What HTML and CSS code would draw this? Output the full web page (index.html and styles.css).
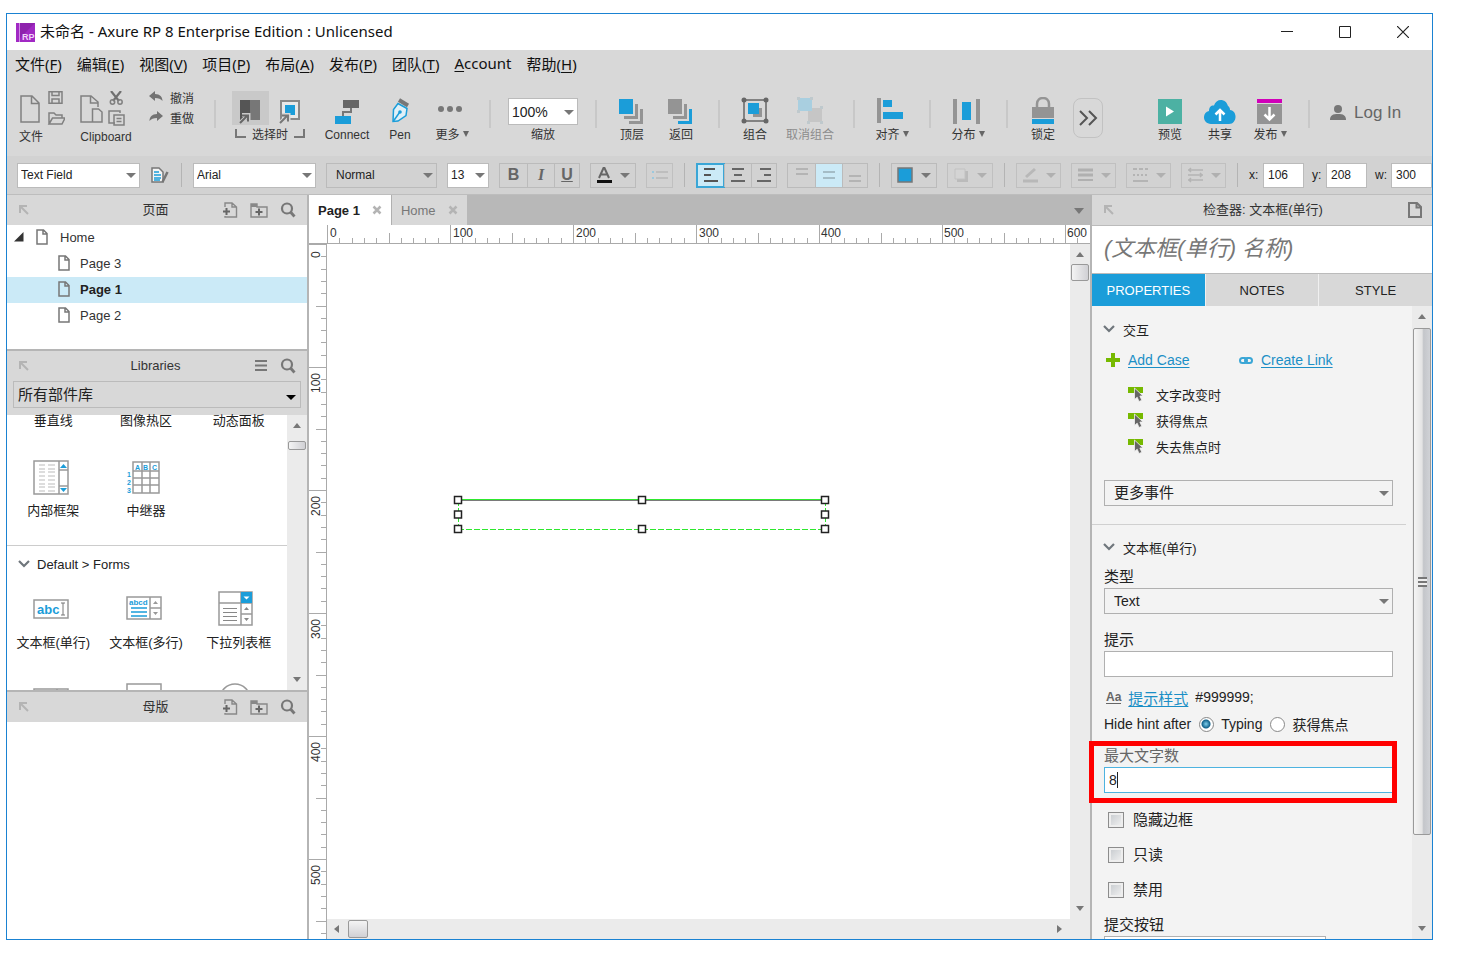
FILE: index.html
```html
<!DOCTYPE html>
<html lang="zh-CN">
<head>
<meta charset="utf-8">
<title>未命名 - Axure RP 8 Enterprise Edition : Unlicensed</title>
<link rel="stylesheet" href="styles.css">
</head>
<body>
<svg class="defs" aria-hidden="true">
  <symbol id="page" viewBox="0 0 12 16"><path d="M1 1h6.500L11 4.500V15H1zM7 1v4h4" fill="none" stroke="#777" stroke-width="1.500"/></symbol>
  <symbol id="dock" viewBox="0 0 10 10"><path d="M1 8V1h7M1.500 1.500l7.500 7.500" fill="none" stroke="#b4b4b4" stroke-width="2"/></symbol>
  <symbol id="search" viewBox="0 0 16 16"><circle cx="7" cy="6.500" r="5" fill="none" stroke="#777" stroke-width="2.200"/><path d="M10.500 10l4 4.500" stroke="#777" stroke-width="2.800"/></symbol>
  <symbol id="addpage" viewBox="0 0 16 16"><path d="M3 5V1h7l4.500 4v10H3v-1M10 1v4h4" fill="none" stroke="#888" stroke-width="1.400"/><path d="M4.500 6v7M1 9.500h7" stroke="#666" stroke-width="2"/></symbol>
  <symbol id="addfolder" viewBox="0 0 18 16"><path d="M1 15V2h6v3h10v10z" fill="none" stroke="#888" stroke-width="1.400"/><path d="M1 2h6v3H1z" fill="#888"/><path d="M9 6.500v7M5.500 10h7" stroke="#666" stroke-width="2"/></symbol>
  <symbol id="chevron" viewBox="0 0 12 8"><path d="M1 1l5 5 5-5" fill="none" stroke="#6f767c" stroke-width="2.200"/></symbol>
  <symbol id="close" viewBox="0 0 10 10"><path d="M1.500 1.500l7 7M8.500 1.500l-7 7" stroke="#b4b4b4" stroke-width="2.500"/></symbol>
  <symbol id="event" viewBox="0 0 15 16"><path d="M0 1h15v6H0z" fill="#76b900"/><path d="M6.500 2v11.500l2.700-2.300 1.800 4.300 2.800-1.200-1.900-4.300h3.100z" fill="#666" stroke="#f3f3f3" stroke-width=".8"/></symbol>
</svg>

<div class="window">
  <header class="titlebar">
    <svg class="logo" viewBox="0 0 19 19" aria-hidden="true"><path d="M0 0h19v19H0z" fill="#a129c4"/><path d="M4 0h15L4 15z" fill="#8e22ad"/><path d="M3.500 0v19" stroke="#d08be4"/><text x="6" y="17" class="logo-text">RP</text></svg>
    <h1 class="title">未命名 - Axure RP 8 Enterprise Edition : Unlicensed</h1>
    <button class="winbtn" aria-label="Minimize"><svg width="12" height="12"><path d="M0 5.500h12" stroke="#222"/></svg></button>
    <button class="winbtn" aria-label="Maximize"><svg width="12" height="12"><path d="M.5.5h11v11H.5z" fill="none" stroke="#222"/></svg></button>
    <button class="winbtn" aria-label="Close"><svg width="12" height="12"><path d="M0 0l12 12M12 0L0 12" stroke="#222" stroke-width="1.200"/></svg></button>
  </header>

  <nav class="menubar">
    <button>文件(<u>F</u>)</button><button>编辑(<u>E</u>)</button><button>视图(<u>V</u>)</button><button>项目(<u>P</u>)</button><button>布局(<u>A</u>)</button><button>发布(<u>P</u>)</button><button>团队(<u>T</u>)</button><button><u>A</u>ccount</button><button>帮助(<u>H</u>)</button>
  </nav>

  <div class="toolbar">
    <div class="tool tool-low tool-file">
      <svg width="46" height="36" viewBox="0 0 46 36" fill="none" stroke="#808080" stroke-width="1.500"><path d="M2 5h11l7 7v19H2zM12.500 5v7.500H20"/><path d="M30 0.800h13v11.500H30zM33 1v3.500h7V1M33 12V8h7v4"/><path d="M30 33V22h5l2 2h6v3M30 33l3.500-6H46l-3 6z"/></svg>
      <span>文件</span>
    </div>
    <div class="tool tool-low">
      <svg width="52" height="36" viewBox="0 0 52 36" fill="none" stroke="#808080" stroke-width="1.500"><path d="M12 31H1V5h10l7 6v5M10.500 5v7H18M12.500 18h6l3.500 3v10h-9.500z"/><g transform="translate(-1 0)"><path d="M32 0l8 10M42 0l-8 10" stroke="#707070" stroke-width="2.200"/><circle cx="33.500" cy="11" r="2.200"/><circle cx="41" cy="11" r="2.200"/><path d="M36 32h-6V20h11v2M35 24h10v10H35zM37.500 27.500h5M37.500 30.500h5"/></g></svg>
      <span>Clipboard</span>
    </div>
    <div class="history">
      <button><svg width="14" height="12" viewBox="0 0 14 12"><path d="M0 5l6-5v3c5 0 7.500 3 7.500 7C12 8 9.500 7 6 7v3z" fill="#737373"/></svg>撤消</button>
      <button><svg width="14" height="12" viewBox="0 0 14 12"><path d="M14 5L8 0v3C3 3 .5 6 .5 10 2 8 4.500 7 8 7v3z" fill="#737373"/></svg>重做</button>
    </div>
    <i class="sep"></i>
    <div class="tool">
      <div class="modes">
        <button class="mode mode-on" aria-label="相交选中"><svg width="22" height="26" viewBox="0 0 22 26"><path d="M1 1h10v20H1z" fill="#555"/><path d="M11 1h10v20H11z" fill="#777"/><path d="M1 24l7-7M3 16h6.500v6.500" fill="none" stroke="#c9c9c9" stroke-width="4"/><path d="M1 24l7-7M3 16.500h6v6" fill="none" stroke="#666" stroke-width="2"/></svg></button>
        <button class="mode" aria-label="包含选中"><svg width="22" height="26" viewBox="0 0 22 26"><path d="M2 2h18v18H2z" fill="#e8e8e8" stroke="#888" stroke-width="2"/><path d="M6 6h10v10H6z" fill="#1b9dd9"/><path d="M1 24l7-7M3 16h6.500v6.500" fill="none" stroke="#d8d8d8" stroke-width="4"/><path d="M1 24l7-7M3 16.500h6v6" fill="none" stroke="#777" stroke-width="2"/></svg></button>
      </div>
      <span class="bracket">选择时</span>
    </div>
    <button class="tool"><svg width="26" height="28" viewBox="0 0 26 28"><path d="M9 3h16v8H9z" fill="#666"/><path d="M17 11v4H9v4" fill="none" stroke="#777" stroke-width="2"/><path d="M1 19h16v8H1z" fill="#1b9dd9"/></svg><span>Connect</span></button>
    <button class="tool"><svg width="20" height="28" viewBox="0 0 20 28"><path d="M9 3l9 5.500" stroke="#777" stroke-width="4"/><path d="M8 6.500l9 5-1 7-8 5.500-5 .5.500-12z" fill="#e0f0f7" stroke="#1b9dd9" stroke-width="1.500"/><path d="M3.500 24l6-8.500" stroke="#1b9dd9" stroke-width="1.500"/><circle cx="10" cy="15" r="1.800" fill="#1b9dd9"/></svg><span>Pen</span></button>
    <button class="tool"><svg width="30" height="28" viewBox="0 0 30 28" fill="#777"><circle cx="4" cy="12" r="3"/><circle cx="13" cy="12" r="3"/><circle cx="22" cy="12" r="3"/></svg><span class="drop">更多</span></button>
    <i class="sep"></i>
    <label class="tool"><span class="select select-zoom"><select><option>100%</option></select></span><span>缩放</span></label>
    <i class="sep"></i>
    <button class="tool"><svg width="28" height="28" viewBox="0 0 28 28"><path d="M22 12h3v15H11v-3h11z" fill="#949494"/><path d="M17 7h3v15H6v-3h11z" fill="#949494"/><path d="M1 2h14v15H1z" fill="#1b9dd9"/></svg><span>顶层</span></button>
    <button class="tool"><svg width="28" height="28" viewBox="0 0 28 28"><path d="M22 12h3v15H11v-3h11z" fill="#1b9dd9"/><path d="M17 7h3v15H6v-3h11z" fill="#949494"/><path d="M1 2h14v15H1z" fill="#949494"/></svg><span>返回</span></button>
    <i class="sep"></i>
    <button class="tool"><svg width="28" height="28" viewBox="0 0 28 28"><path d="M12 11h9v9h-9z" fill="#949494"/><path d="M7 6h11v11H7z" fill="#1b9dd9"/><path d="M3 3h22v21H3z" fill="none" stroke="#666" stroke-width="1.500"/><g fill="#666"><circle cx="3" cy="3" r="2.500"/><circle cx="25" cy="3" r="2.500"/><circle cx="3" cy="24" r="2.500"/><circle cx="25" cy="24" r="2.500"/></g></svg><span>组合</span></button>
    <button class="tool" disabled><svg width="28" height="28" viewBox="0 0 28 28"><path d="M12 11h14v14H12z" fill="#c6c6c6"/><path d="M2 1h14v13H2z" fill="#a9cfe0"/><path d="M1 0h3v3H1zM14 0h3v3h-3zM1 13h3v3H1zM24 9h3v3h-3zM11 24h3v3h-3zM24 24h3v3h-3z" fill="#bfc9cd"/></svg><span>取消组合</span></button>
    <i class="sep"></i>
    <button class="tool"><svg width="32" height="28" viewBox="0 0 32 28"><path d="M1 1h4v25H1z" fill="#949494"/><path d="M7 3h9v7H7zM7 15h20v7H7z" fill="#1b9dd9"/></svg><span class="drop">对齐</span></button>
    <i class="sep"></i>
    <button class="tool"><svg width="32" height="28" viewBox="0 0 32 28"><path d="M1 2h4v25H1zM24 2h4v25h-4z" fill="#949494"/><path d="M10 5h9v18h-9z" fill="#1b9dd9"/></svg><span class="drop">分布</span></button>
    <i class="sep"></i>
    <button class="tool"><svg width="24" height="28" viewBox="0 0 24 28"><path d="M6 11V7c0-8 12-8 12 0v4" fill="none" stroke="#949494" stroke-width="2.500"/><path d="M1 10h22v11H1z" fill="#949494"/><path d="M1 22h22v5H1z" fill="#1b9dd9"/></svg><span>锁定</span></button>
    <button class="overflow" aria-label="More tools"><svg width="20" height="16" viewBox="0 0 20 16"><path d="M2 1l7 7-7 7M11 1l7 7-7 7" fill="none" stroke="#555" stroke-width="2"/></svg></button>
    <i></i>
    <button class="tool"><svg width="26" height="28" viewBox="0 0 26 28"><path d="M1 2h24v25H1z" fill="#4cb1a3"/><path d="M9 9.500l8 5-8 5z" fill="#fff"/></svg><span>预览</span></button>
    <button class="tool"><svg width="32" height="28" viewBox="0 0 32 28"><path d="M7 27c-9 0-9-12-2-13C5 9 8 8 10 8.500 12 1 22 1 24 9c1 .5 2 2 2 4 8 1 7 14-1 14z" fill="#1b9dd9"/><path d="M16 24V14M11.500 17.500L16 13l4.500 4.500" fill="none" stroke="#fff" stroke-width="2.500"/></svg><span>共享</span></button>
    <button class="tool"><svg width="32" height="28" viewBox="0 0 32 28"><path d="M3 2h25v4H3z" fill="#d100b9"/><path d="M3 7h25v20H3z" fill="#949494"/><path d="M15.500 10v12M10.500 17.500l5 5 5-5" fill="none" stroke="#fff" stroke-width="2.500"/></svg><span class="drop">发布</span></button>
    <i class="sep"></i>
    <button class="login"><svg width="16" height="16" viewBox="0 0 16 16" fill="#777"><circle cx="8" cy="4" r="4"/><path d="M0 15c0-5 3-6 8-6s8 1 8 6z"/></svg>Log In</button>
  </div>

  <div class="stylebar">
    <span class="select select-wide"><select aria-label="Widget style"><option>Text Field</option></select></span>
    <button class="icon-btn" aria-label="Style manager"><svg width="18" height="16" viewBox="0 0 18 16"><path d="M1 1h7l4 4v10H1z" fill="#f4f4f4" stroke="#777" stroke-width="1.500"/><path d="M3 5h5M3 8h7M3 11h7M3 13h6" stroke="#1b9dd9" stroke-width="1.500"/><path d="M16.500 5l-5 10" stroke="#777" stroke-width="2.500"/></svg></button>
    <i class="rule"></i>
    <span class="select select-wide"><select aria-label="Font"><option>Arial</option></select></span>
    <span class="select select-plain select-weight"><select aria-label="Font weight"><option>Normal</option></select></span>
    <span class="select select-size"><select aria-label="Font size"><option>13</option></select></span>
    <div class="btngroup">
      <button class="bold">B</button><button class="ital">I</button><button class="under">U</button>
    </div>
    <button class="combo caret" aria-label="Text color"><svg width="16" height="18" viewBox="0 0 16 18"><path d="M3 12L7.500 2h1L13 12M5 8.500h6" fill="none" stroke="#666" stroke-width="2"/><path d="M1 14h15v3H1z" fill="#111"/></svg></button>
    <button class="combo combo-small faded" aria-label="Bullets"><svg width="16" height="12" viewBox="0 0 16 12"><path d="M4 3h12M4 9h12" stroke="#b8b8b8" stroke-width="1.500"/><path d="M0 3h2M0 9h2" stroke="#9cc9de" stroke-width="2"/></svg></button>
    <i class="rule"></i>
    <div class="btngroup">
      <button class="chosen" aria-label="Align left"><svg width="16" height="16"><path d="M1 2h11M1 8h7M1 14h14" stroke="#555" stroke-width="2"/></svg></button>
      <button aria-label="Align center"><svg width="16" height="16"><path d="M2 2h12M4 8h8M1 14h14" stroke="#666" stroke-width="2"/></svg></button>
      <button aria-label="Align right"><svg width="16" height="16"><path d="M4 2h11M8 8h7M1 14h14" stroke="#666" stroke-width="2"/></svg></button>
    </div>
    <div class="btngroup">
      <button aria-label="Top"><svg width="16" height="16"><path d="M2 2h12M2 7h12" stroke="#b4b4b4" stroke-width="2"/></svg></button>
      <button class="tinted" aria-label="Middle"><svg width="16" height="16"><path d="M2 5h12M2 11h12" stroke="#a4bcc6" stroke-width="2"/></svg></button>
      <button aria-label="Bottom"><svg width="16" height="16"><path d="M2 9h12M2 14h12" stroke="#b4b4b4" stroke-width="2"/></svg></button>
    </div>
    <i class="rule"></i>
    <button class="combo caret" aria-label="Fill"><svg width="16" height="16"><path d="M1 1h14v14H1z" fill="#1b9dd9" stroke="#777" stroke-width="1.500"/></svg></button>
    <button class="combo caret faded" aria-label="Shadow"><svg width="16" height="16"><path d="M4 4h11v11H4z" fill="#bbb"/><path d="M2 2h10v10H2z" fill="#d4d4d4" stroke="#c2c2c2"/></svg></button>
    <i class="rule"></i>
    <button class="combo combo-line caret faded" aria-label="Line color"><svg width="16" height="16"><path d="M4 10l9-8" stroke="#b8b8b8" stroke-width="3"/><path d="M1 14h15" stroke="#b8b8b8" stroke-width="3"/></svg></button>
    <button class="combo combo-line caret faded" aria-label="Line width"><svg width="16" height="16"><path d="M1 3h15M1 8h15" stroke="#b0b0b0" stroke-width="3"/><path d="M1 13h15" stroke="#b0b0b0" stroke-width="2"/></svg></button>
    <button class="combo combo-line caret faded" aria-label="Line style"><svg width="16" height="16" stroke="#b4b4b4" stroke-width="2"><path d="M1 2h15" stroke-dasharray="4 2"/><path d="M1 8h15" stroke-dasharray="2 2"/><path d="M1 14h15"/></svg></button>
    <button class="combo combo-line caret faded" aria-label="Arrow style"><svg width="16" height="16" fill="none" stroke="#b4b4b4" stroke-width="1.500"><path d="M1 3h15M1 8h15M1 13h15M4 1L2 3l2 2M13 6l2 2-2 2M4 11l-2 2 2 2"/></svg></button>
    <i class="rule"></i>
    <label class="coord">x: <input value="106"></label>
    <label class="coord">y: <input value="208"></label>
    <label class="coord">w: <input value="300"></label>
  </div>

  <div class="workspace">
    <aside class="left">
      <section>
        <div class="pane-head"><svg class="dock"><use href="#dock"/></svg><h2>页面</h2><div class="pane-tools"><button aria-label="Add page"><svg width="16" height="16"><use href="#addpage"/></svg></button><button aria-label="Add folder"><svg width="18" height="16"><use href="#addfolder"/></svg></button><button aria-label="Search"><svg width="16" height="16"><use href="#search"/></svg></button></div></div>
        <ul class="tree">
          <li class="root"><svg width="10" height="10"><path d="M9.500 0v9.500H0z" fill="#333"/></svg><svg class="leaf"><use href="#page"/></svg>Home</li>
          <li><svg class="leaf"><use href="#page"/></svg>Page 3</li>
          <li class="current"><svg class="leaf"><use href="#page"/></svg>Page 1</li>
          <li><svg class="leaf"><use href="#page"/></svg>Page 2</li>
        </ul>
      </section>
      <section class="ruled">
        <div class="pane-head"><svg class="dock"><use href="#dock"/></svg><h2>Libraries</h2><div class="pane-tools"><button aria-label="Library menu"><svg width="14" height="14"><path d="M1 2h12M1 6.500h12M1 11h12" stroke="#777" stroke-width="2"/></svg></button><button aria-label="Search"><svg width="16" height="16"><use href="#search"/></svg></button></div></div>
        <div class="library-pick"><span class="select select-plain select-library"><select aria-label="Library"><option>所有部件库</option></select></span></div>
        <div class="library">
          <div class="library-list">
            <div class="shapes shapes-tail"><span>垂直线</span><span>图像热区</span><span>动态面板</span></div>
            <div class="shapes shapes-common">
              <figure><svg width="40" height="36" viewBox="0 0 40 36"><path d="M3 1h34v33H3zM28 1v33M28 10h9M28 26h9" fill="#fff" stroke="#999" stroke-width="1.500"/><path d="M8 5h6M17 5h7M8 9h6M17 9h7M8 12h6M17 12h7M8 16h6M17 16h7M8 20h6M17 20h7M8 24h6M17 24h7M8 27h6M17 27h7M8 31h6M17 31h7" stroke="#bbb"/><path d="M29 8l3.500-4L36 8zM29 28h7l-3.500 4z" fill="#1b9dd9"/></svg><figcaption>内部框架</figcaption></figure>
              <figure><svg width="40" height="36" viewBox="0 0 40 36"><path d="M9 2h26v31H9zM18 2v31M26 2v31M9 11h26M9 18h26M9 25h26" fill="none" stroke="#999" stroke-width="1.500"/><text class="glyph" x="11" y="10">A</text><text class="glyph" x="19" y="10">B</text><text class="glyph" x="28" y="10">C</text><text class="glyph" x="3" y="17">1</text><text class="glyph" x="3" y="25">2</text><text class="glyph" x="3" y="33">3</text></svg><figcaption>中继器</figcaption></figure>
            </div>
            <h3 class="group-head"><svg width="12" height="8"><use href="#chevron"/></svg>Default &gt; Forms</h3>
            <div class="shapes shapes-forms">
              <figure><svg width="40" height="36" viewBox="0 0 40 36"><path d="M3 9h34v18H3z" fill="#fff" stroke="#999" stroke-width="1.500"/><text class="glyph glyph-big" x="6" y="23">abc</text><path d="M30 12h4M30 24h4M32 12v12" stroke="#777"/></svg><figcaption>文本框(单行)</figcaption></figure>
              <figure><svg width="40" height="36" viewBox="0 0 40 36"><path d="M3 6h34v22H3zM26 6v22M26 17h11" fill="#fff" stroke="#999" stroke-width="1.500"/><text class="glyph glyph-mid" x="5" y="14">abcd</text><path d="M7 17h16M7 21h16M7 25h16" stroke="#1b9dd9" stroke-width="1.500"/><path d="M29 13l2.500-3 2.500 3zM29 21h5l-2.500 3z" fill="#999"/></svg><figcaption>文本框(多行)</figcaption></figure>
              <figure><svg width="40" height="36" viewBox="0 0 40 36"><path d="M2 1h33v33H2zM2 12h33M24 1v33M24 23h11" fill="#fff" stroke="#999" stroke-width="1.500"/><path d="M24 1h11v11H24z" fill="#1b9dd9"/><path d="M26.500 5.500h6l-3 3z" fill="#fff"/><path d="M27 19l2.500-3 2.500 3zM27 27h5l-2.500 3zM6 17h14v1H6zM6 21h14v1H6zM6 25h14v1H6zM6 29h14v1H6z" fill="#888"/></svg><figcaption>下拉列表框</figcaption></figure>
              <figure><svg width="40" height="36" viewBox="0 0 40 36"><path d="M3 6h34v24H3zM26 6v24" fill="none" stroke="#999" stroke-width="1.500"/></svg></figure>
              <figure><svg width="40" height="36" viewBox="0 0 40 36"><path d="M3 1h34v33H3z" fill="none" stroke="#999" stroke-width="1.500"/></svg></figure>
              <figure><svg width="40" height="36" viewBox="0 0 40 36"><circle cx="18" cy="16" r="15" fill="none" stroke="#999" stroke-width="1.500"/></svg></figure>
            </div>
          </div>
          <div class="vbar"><i class="up"></i><i class="thumb thumb-flat"></i><i class="down"></i></div>
        </div>
      </section>
      <section class="ruled masters">
        <div class="pane-head"><svg class="dock"><use href="#dock"/></svg><h2>母版</h2><div class="pane-tools"><button aria-label="Add master"><svg width="16" height="16"><use href="#addpage"/></svg></button><button aria-label="Add folder"><svg width="18" height="16"><use href="#addfolder"/></svg></button><button aria-label="Search"><svg width="16" height="16"><use href="#search"/></svg></button></div></div>
      </section>
    </aside>

    <main class="center">
      <div class="tabs">
        <button class="tab tab-active">Page 1<svg width="10" height="10"><use href="#close"/></svg></button>
        <button class="tab">Home<svg width="10" height="10"><use href="#close"/></svg></button>
        <button class="tab-list" aria-label="All tabs"></button>
      </div>
      <div class="ruler-x">
        <svg width="100%" height="18">
          <defs><pattern id="tx" width="123" height="18" patternUnits="userSpaceOnUse" x="18"><path class="tick" d="M.5 0v18M12.800 13v5M25.100 13v5M37.400 13v5M49.700 13v5M62 8v10M74.300 13v5M86.600 13v5M98.900 13v5M111.200 13v5"/></pattern></defs>
          <rect x="18" width="100%" height="18" fill="url(#tx)"/>
          <g class="scale"><text x="21" y="12">0</text><text x="144" y="12">100</text><text x="267" y="12">200</text><text x="390" y="12">300</text><text x="512" y="12">400</text><text x="635" y="12">500</text><text x="758" y="12">600</text></g>
        </svg>
      </div>
      <div class="stage">
        <div class="ruler-y">
          <svg width="17" height="100%">
            <defs><pattern id="ty" width="17" height="123" patternUnits="userSpaceOnUse"><path class="tick" d="M0 .5h17M12 12.800h5M12 25.100h5M12 37.400h5M12 49.700h5M7 62h10M12 74.300h5M12 86.600h5M12 98.900h5M12 111.200h5"/></pattern></defs>
            <rect width="17" height="100%" fill="url(#ty)"/>
            <g class="scale"><text transform="translate(11 14) rotate(-90)">0</text><text transform="translate(11 149) rotate(-90)">100</text><text transform="translate(11 272) rotate(-90)">200</text><text transform="translate(11 395) rotate(-90)">300</text><text transform="translate(11 518) rotate(-90)">400</text><text transform="translate(11 641) rotate(-90)">500</text></g>
          </svg>
        </div>
        <div class="canvas">
          <svg class="widget" width="377" height="39" viewBox="0 0 377 39"><path d="M5 5.500h367" stroke="#7a7a7a"/><path d="M5 4.500h367" stroke="#2ee82e"/><path d="M5.500 5v29M372.500 5v29M5 34.500h367" fill="none" stroke="#2ee82e" stroke-dasharray="6 2"/><g fill="#fff" stroke="#222" stroke-width="1.500"><path d="M1.500 1.500h7v7h-7zM1.500 16h7v7h-7zM1.500 30.500h7v7h-7zM185.500 1.500h7v7h-7zM185.500 30.500h7v7h-7zM368.500 1.500h7v7h-7zM368.500 16h7v7h-7zM368.500 30.500h7v7h-7z"/></g></svg>
        </div>
        <div class="vbar"><i class="up"></i><i class="thumb thumb-square"></i><i class="down"></i></div>
        <div class="hbar"><i class="prev"></i><i class="thumb"></i><i class="next"></i></div>
      </div>
    </main>

    <aside class="inspector">
      <div class="pane-head"><svg class="dock"><use href="#dock"/></svg><h2>检查器: 文本框(单行)</h2><div class="pane-tools"><button aria-label="Page properties"><svg width="14" height="16" viewBox="0 0 14 16"><path d="M1 1h8l4 4v10H1zM8.500 1v4.500H13" fill="none" stroke="#777" stroke-width="2"/></svg></button></div></div>
      <input class="name" placeholder="(文本框(单行) 名称)" aria-label="名称">
      <div class="views"><button class="view view-on">PROPERTIES</button><button class="view">NOTES</button><button class="view">STYLE</button></div>
      <div class="scroller">
        <form class="props">
          <h3 class="section"><svg width="12" height="8"><use href="#chevron"/></svg>交互</h3>
          <div class="actions">
            <span class="action"><svg width="14" height="14"><path d="M7 0v14M0 7h14" stroke="#76b900" stroke-width="4"/></svg><a href="#case">Add Case</a></span>
            <span class="action"><svg width="14" height="14" viewBox="0 0 14 14" fill="none" stroke="#3aa6d6" stroke-width="2"><rect x="1" y="5" width="7" height="5" rx="2.500"/><rect x="6" y="5" width="7" height="5" rx="2.500"/></svg><a href="#link">Create Link</a></span>
          </div>
          <ul class="events">
            <li><svg width="15" height="16"><use href="#event"/></svg>文字改变时</li>
            <li><svg width="15" height="16"><use href="#event"/></svg>获得焦点</li>
            <li><svg width="15" height="16"><use href="#event"/></svg>失去焦点时</li>
          </ul>
          <span class="select select-form select-more"><select aria-label="更多事件"><option>更多事件</option></select></span>
          <hr class="divider">
          <h3 class="section section-next"><svg width="12" height="8"><use href="#chevron"/></svg>文本框(单行)</h3>
          <label class="caption caption-first" for="type">类型</label>
          <span class="select select-form"><select id="type"><option>Text</option></select></span>
          <label class="caption caption-hint" for="hint">提示</label>
          <input class="field" id="hint">
          <p class="hint-style"><b>Aa</b><a href="#hint">提示样式</a><span>#999999;</span></p>
          <div class="hide-hint"><span>Hide hint after</span><label><input type="radio" name="hide" checked>Typing</label><label><input type="radio" name="hide">获得焦点</label></div>
          <label class="caption caption-max" for="max">最大文字数</label>
          <div class="field field-focus"><input id="max" value="8" size="1"><i class="cursor"></i></div>
          <label class="check check-first"><input type="checkbox">隐藏边框</label>
          <label class="check"><input type="checkbox">只读</label>
          <label class="check"><input type="checkbox">禁用</label>
          <label class="caption caption-submit" for="submit">提交按钮</label>
          <input class="field field-short" id="submit">
        </form>
        <div class="vbar"><i class="up"></i><i class="thumb thumb-tall"></i><i class="down"></i></div>
      </div>
      <div class="callout"></div>
    </aside>
  </div>
</div>
</body>
</html>
```
FILE: styles.css
```css
* { box-sizing: border-box; }
html, body { height: 100%; }
body {
  margin: 0;
  padding: 13px 24px 21px 6px;
  background: #fff;
  color: #222;
  font: 13px "Liberation Sans", "Noto Sans CJK SC", sans-serif;
  overflow: hidden;
}
button, input, select { font: inherit; color: inherit; margin: 0; padding: 0; border: 0; background: none; border-radius: 0; outline: 0; }
h1, h2, h3, p, ul, figure { margin: 0; padding: 0; font-size: inherit; font-weight: normal; list-style: none; }
svg { display: block; flex: none; }
.defs { position: absolute; width: 0; height: 0; }

.window { display: flex; flex-direction: column; height: 100%; border: 1px solid #1a82d2; overflow: hidden; }

.titlebar { display: flex; align-items: center; flex: none; height: 36px; padding-left: 9px; }
.logo { width: 19px; height: 19px; }
.logo-text { font: bold 9px "Liberation Sans", sans-serif; fill: #f0d4f8; }
.title { flex: 1; margin-left: 5px; padding-bottom: 3px; font: 15px "Noto Sans", "Noto Sans CJK SC", sans-serif; color: #111; white-space: nowrap; }
.winbtn { display: grid; place-items: center; width: 58px; height: 36px; }

.menubar { display: flex; align-items: center; gap: 15px; flex: none; height: 30px; padding: 0 0 4px 8px; background: #d8d8d8; font: 15px "Noto Sans", "Noto Sans CJK SC", sans-serif; color: #111; }
.menubar button { white-space: nowrap; }
.menubar u { text-underline-offset: 2px; }

.toolbar {
  display: grid;
  grid-template-columns: 65px 68px 63px 24px 86px 68px 38px 66px 10px 96px 10px 62px 36px 40px 32px 78px 10px 66px 10px 66px 12px 60px 30px 1fr 50px 50px 50px 28px 109px;
  flex: none;
  height: 76px;
  padding-top: 11px;
  background: #d8d8d8;
  font-size: 12px;
  color: #333;
}
.tool { display: flex; flex-direction: column; align-items: center; justify-content: flex-end; height: 52px; white-space: nowrap; line-height: 16px; gap: 2px; }
.tool > span:last-child { display: block; }
.tool:disabled { color: #8c8c8c; }
.tool-low { height: 54px; }
.tool-file { align-items: flex-start; padding-left: 12px; }
.history { display: flex; flex-direction: column; gap: 4px; height: 36px; padding-left: 9px; }
.history button { display: flex; align-items: center; gap: 7px; height: 14px; padding-bottom: 2px; white-space: nowrap; }
.history button + button { margin-top: 2px; }
.sep { justify-self: center; width: 2px; height: 28px; margin-top: 9px; background: #c8c8c8; }
.modes { display: flex; gap: 3px; }
.mode { display: grid; place-items: end center; width: 37px; height: 34px; }
.mode-on { background: #c9c9c9; }
.bracket::before, .bracket::after { content: ""; display: inline-block; width: 9px; height: 7px; border: solid #777; border-width: 0 0 2px 2px; margin-right: 6px; vertical-align: 1px; }
.bracket::after { border-width: 0 2px 2px 0; margin: 0 0 0 6px; }
.drop::after { content: ""; display: inline-block; margin-left: 3px; border: 3px solid transparent; border-top: 6px solid #666; border-bottom: 0; vertical-align: 2px; }
.overflow { display: grid; place-items: center; width: 30px; height: 40px; margin-top: 7px; border: 1px solid #c2c2c2; border-radius: 8px; }
.login { display: flex; align-items: center; gap: 8px; height: 44px; padding-left: 7px; font-size: 17px; color: #666; }

.select { position: relative; display: block; height: 25px; border: 1px solid #bbb; background: #fff; color: #222; }
.select select { display: block; width: 100%; height: 100%; padding: 0 3px; appearance: none; font-size: 12px; }
.select::after { content: ""; position: absolute; right: 3px; top: 50%; margin-top: -2px; border: 5px solid transparent; border-top-color: #777; border-bottom: 0; pointer-events: none; }
.select-zoom { width: 70px; height: 27px; }
.select-zoom select { font-size: 14px; }
.select-wide { width: 123px; }
.select-weight { width: 111px; }
.select-weight select { padding-left: 9px; }
.select-size { width: 42px; }
.select-plain { background: none; }

.stylebar { display: flex; align-items: center; gap: 10px; flex: none; height: 39px; padding-left: 10px; background: #d2d2d2; border-bottom: 1px solid #bdbdbd; font-size: 12px; overflow: hidden; }
.stylebar > * { flex: none; }
.icon-btn { display: grid; place-items: center; width: 20px; height: 25px; }
.rule { width: 1px; height: 24px; margin: 0 1px; background: #b4b4b4; }
.btngroup { display: flex; height: 25px; border: 1px solid #bbb; }
.btngroup button { display: grid; place-items: center; width: 27px; height: 23px; color: #666; font-size: 16px; line-height: 20px; }
.btngroup button:last-child { width: 25px; }
.btngroup button + button { border-left: 1px solid #bbb; }
.btngroup .bold, .btngroup .under { font-weight: bold; }
.btngroup .under { text-decoration: underline; }
.btngroup .ital { font-family: "Liberation Serif", serif; font-style: italic; font-weight: bold; }
.btngroup .chosen { background: #cbeaf7; outline: 2px solid #3aa6d6; outline-offset: -1px; }
.btngroup .tinted { background: #cbeaf7; }
.combo { display: flex; align-items: center; justify-content: center; gap: 8px; width: 46px; height: 25px; border: 1px solid #bbb; }
.combo-line { width: 45px; }
.combo-small { width: 27px; }
.caret::after { content: ""; border: 5px solid transparent; border-top-color: #777; border-bottom: 0; }
.faded { border-color: #c0c0c0; }
.faded::after { border-top-color: #b0b0b0; }
.coord { display: flex; align-items: center; justify-content: space-between; gap: 4px; min-width: 55px; margin-right: -2px; }
.coord input { width: 41px; height: 25px; padding-left: 4px; border: 1px solid #bbb; background: #fff; color: #222; }

.workspace { display: flex; flex: 1; min-height: 0; }
.left { display: flex; flex-direction: column; flex: none; width: 302px; border-right: 2px solid #b5b5b5; background: #fff; }
.ruled { border-top: 2px solid #b5b5b5; }
.masters { flex: 1; }
.pane-head { display: grid; grid-template-columns: 1fr auto 1fr; align-items: center; height: 30px; padding: 0 12px; background: #d8d8d8; color: #333; }
.left .pane-head { padding-right: 11px; }
.pane-head h2 { font-size: 13px; line-height: 20px; }
.dock { width: 10px; height: 10px; }
.pane-tools { display: flex; align-items: center; justify-content: flex-end; gap: 12px; }
.pane-tools button { display: block; }
.left h2 { margin-right: 4px; }

.tree { height: 124px; font-size: 13px; color: #333; }
.tree li { display: flex; align-items: center; gap: 10px; height: 26px; padding: 0 0 2px 51px; }
.tree .root { padding-left: 7px; gap: 12px; }
.tree .current { background: #cbeaf7; font-weight: bold; color: #222; }
.leaf { width: 12px; height: 16px; }

.library-pick { height: 34px; padding: 0 6px; background: #d8d8d8; }
.select-library { height: 27px; }
.select-library select { padding-left: 4px; font-size: 15px; }
.select-library::after { border-top-color: #000; margin-top: 0; right: 4px; }
.library { display: flex; height: 275px; }
.library-list { flex: 1; padding-right: 2px; clip-path: inset(-8px 0 0 0); }
.shapes { display: grid; grid-template-columns: repeat(3, 1fr); justify-items: center; }
.shapes-tail { height: 12px; line-height: 12px; }
.shapes-common { margin-right: -2px; padding: 33px 2px 25px 0; border-bottom: 1px solid #ccc; }
.shapes-forms { padding-top: 9px; row-gap: 31px; }
.shapes figure { display: flex; flex-direction: column; align-items: center; gap: 6px; }
.shapes-forms figure { gap: 7px; }
.shapes figure svg { margin-right: 4px; }
.shapes figcaption { line-height: 18px; white-space: nowrap; }
.glyph { font: bold 7px "Liberation Sans", sans-serif; fill: #1b9dd9; }
.glyph-mid { font-size: 8px; }
.glyph-big { font-size: 13px; }
.group-head { display: flex; align-items: center; gap: 7px; height: 36px; padding-left: 11px; }

.vbar { display: flex; flex-direction: column; align-items: center; flex: none; width: 20px; padding: 8px 0; background: #ebebeb; }
.vbar i, .hbar i { flex: none; }
.up { border: 4px solid transparent; border-bottom: 5px solid #777; border-top: 0; }
.down { margin-top: auto; border: 4px solid transparent; border-top: 5px solid #777; border-bottom: 0; }
.prev { border: 4px solid transparent; border-right: 5px solid #777; border-left: 0; }
.next { margin-left: auto; border: 4px solid transparent; border-left: 5px solid #777; border-right: 0; }
.thumb { width: 20px; height: 18px; border: 1px solid #999; border-radius: 2px; background: linear-gradient(#f4f4f4, #d0d0d4); }
.thumb-flat { width: 18px; height: 9px; margin-top: 13px; background: linear-gradient(90deg, #f4f4f4, #d0d0d4); }
.thumb-square { width: 18px; height: 17px; margin-top: 7px; background: linear-gradient(90deg, #f4f4f4, #d0d0d4); }
.vbar .thumb-tall { display: grid; width: 18px; flex: 0 1 507px; margin-top: 9px; background: linear-gradient(90deg, #f4f4f4, #e4e4e4 50%, #c4c6ca 60%, #d0d2d6); }
.thumb-tall::after { content: ""; place-self: center; width: 9px; height: 10px; background: repeating-linear-gradient(#777 0 2px, #eee 2px 4px); }

.center { display: flex; flex-direction: column; flex: 1; min-width: 0; border-right: 2px solid #b5b5b5; }
.tabs { display: flex; height: 30px; background: #b8b8b8; }
.tab { display: flex; align-items: center; gap: 12px; padding: 0 9px; background: #d8d8d8; color: #777; border-left: 1px solid #b0b0b0; white-space: nowrap; }
.tab-active { background: #fff; color: #222; font-weight: bold; border-left: 0; }
.tab-list { margin: 2px 6px 0 auto; align-self: center; border: 5px solid transparent; border-top: 6px solid #777; border-bottom: 0; }
.ruler-x { height: 19px; border-bottom: 1px solid #aaa; }
.scale { font-size: 12px; fill: #333; }
.tick { stroke: #aaa; shape-rendering: crispEdges; }
.stage { display: grid; grid-template: 1fr 20px / 18px 1fr 20px; flex: 1; min-height: 0; }
.ruler-y { grid-row: 1 / 3; border-right: 1px solid #aaa; overflow: hidden; }
.canvas { position: relative; background: #fff; overflow: hidden; }
.widget { position: absolute; left: 126px; top: 251px; }
.hbar { display: flex; align-items: center; grid-column: 2 / 4; padding: 0 28px 0 7px; background: #ebebeb; }
.hbar .thumb { margin-left: 9px; }

.inspector { position: relative; display: flex; flex-direction: column; flex: none; width: 340px; }
.inspector .pane-head { flex: none; padding-right: 10px; }
.name { flex: none; height: 49px; padding: 0 0 2px 12px; border-top: 1px solid #bbb; border-bottom: 1px solid #bbb; font-size: 22px; font-style: italic; }
.name::placeholder { color: #777; opacity: 1; }
.views { display: grid; grid-template-columns: repeat(3, 1fr); gap: 1px; flex: none; height: 32px; background: #f0f0f0; font-size: 13px; }
.view { background: #d8d8d8; }
.view-on { background: #1b9dd9; color: #fff; }
.scroller { display: flex; flex: 1; min-height: 0; background: #f3f3f3; }
.props { flex: 1; min-width: 0; padding: 12px 19px 0 12px; overflow: hidden; }
.section { display: flex; align-items: center; gap: 8px; height: 22px; margin-left: -1px; }
.section-next { margin-top: 11px; }
.actions { display: grid; grid-template-columns: 133px 1fr; height: 24px; margin-top: 8px; padding-left: 2px; font-size: 14px; }
.action { display: flex; align-items: center; gap: 8px; }
a { color: #1b8fc6; text-underline-offset: 2px; }
.events { margin-top: 10px; padding-left: 24px; }
.events li { display: flex; align-items: center; gap: 13px; height: 26px; padding-bottom: 2px; }
.select-form { height: 26px; border-color: #b0b0b0; background: none; }
.select-form select { padding-left: 9px; font-size: 14px; }
.select-more { margin-top: 20px; }
.select-more select { padding-bottom: 2px; font-size: 15px; }
.divider { height: 1px; margin: 18px -13px 0 -12px; border: 0; background: #d0d0d0; }
.caption { display: block; height: 20px; margin-bottom: 1px; font-size: 15px; line-height: 20px; }
.caption-first { margin-top: 9px; }
.caption-hint { margin-top: 16px; }
.caption-max { margin-top: 12px; color: #666; }
.caption-submit { margin-top: 15px; }
.field { display: block; width: 100%; height: 26px; border: 1px solid #b0b0b0; background: #fff; font-size: 14px; }
.field-focus { display: flex; align-items: center; padding-left: 4px; border-color: #4db3e0; border-right: 0; }
.field-focus input { width: 8px; }
.cursor { width: 1px; height: 16px; background: #222; }
.field-short { width: 222px; }
.hint-style { display: flex; align-items: center; gap: 7px; height: 20px; margin-top: 11px; padding: 0 0 2px 2px; font-size: 14px; }
.hint-style a { font-size: 15px; }
.hint-style b { font-size: 12px; line-height: 12px; color: #666; border-bottom: 1px solid #666; }
.hide-hint { display: flex; align-items: center; gap: 8px; height: 20px; margin-top: 6px; font-size: 14px; white-space: nowrap; }
.hide-hint label { display: flex; align-items: center; gap: 7px; }
input[type="radio"] { appearance: none; width: 15px; height: 15px; border: 1px solid #888; border-radius: 50%; background: #fff; }
input[type="radio"]:checked { background: radial-gradient(circle at 6px 6px, #7fd0ee 0, #12628c 4px, #fff 5px); }
.check { display: flex; align-items: center; gap: 9px; height: 20px; margin-top: 15px; padding-left: 4px; font-size: 15px; line-height: 18px; }
.check-first { margin-top: 17px; }
input[type="checkbox"] { appearance: none; width: 16px; height: 16px; border: 1px solid #8c8c8c; background: linear-gradient(135deg, #c4c8cc, #f4f4f4); box-shadow: inset 0 0 0 2px #eee; }
.callout { position: absolute; left: -3px; top: 546px; width: 308px; height: 62px; border: 5px solid #f00; pointer-events: none; }
```
